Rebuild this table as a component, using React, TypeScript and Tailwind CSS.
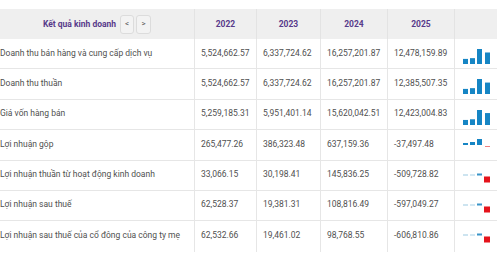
type Row = {
  label: string
  values: string[]
  nums: number[]
}

const rows: Row[] = [
  {
    label: 'Doanh thu bán hàng và cung cấp dịch vụ',
    values: ['5,524,662.57', '6,337,724.62', '16,257,201.87', '12,478,159.89'],
    nums: [5524662.57, 6337724.62, 16257201.87, 12478159.89],
  },
  {
    label: 'Doanh thu thuần',
    values: ['5,524,662.57', '6,337,724.62', '16,257,201.87', '12,385,507.35'],
    nums: [5524662.57, 6337724.62, 16257201.87, 12385507.35],
  },
  {
    label: 'Giá vốn hàng bán',
    values: ['5,259,185.31', '5,951,401.14', '15,620,042.51', '12,423,004.83'],
    nums: [5259185.31, 5951401.14, 15620042.51, 12423004.83],
  },
  {
    label: 'Lợi nhuận gộp',
    values: ['265,477.26', '386,323.48', '637,159.36', '-37,497.48'],
    nums: [265477.26, 386323.48, 637159.36, -37497.48],
  },
  {
    label: 'Lợi nhuận thuần từ hoạt động kinh doanh',
    values: ['33,066.15', '30,198.41', '145,836.25', '-509,728.82'],
    nums: [33066.15, 30198.41, 145836.25, -509728.82],
  },
  {
    label: 'Lợi nhuận sau thuế',
    values: ['62,528.37', '19,381.31', '108,816.49', '-597,049.27'],
    nums: [62528.37, 19381.31, 108816.49, -597049.27],
  },
  {
    label: 'Lợi nhuận sau thuế của cổ đông của công ty mẹ',
    values: ['62,532.66', '19,461.02', '98,768.55', '-606,810.86'],
    nums: [62532.66, 19461.02, 98768.55, -606810.86],
  },
]

const years = ['2022', '2023', '2024', '2025']
const grid = 'grid grid-cols-[195px_62px_64px_67px_67px_42px]'

// mini bar chart in the last column
function Spark({ nums, index }: { nums: number[]; index: number }) {
  const xs = [8, 15, 22, 30]
  const hasNeg = nums.some((n) => n < 0)

  if (!hasNeg) {
    const max = Math.max(...nums)
    const base = 25
    return (
      <svg width="42" height="30" viewBox="0 0 42 30">
        {nums.map((n, i) => {
          const h = Math.max(1, (n / max) * 15)
          return <rect key={i} x={xs[i]} y={base - h} width={5} height={h} fill="#1685c4" />
        })}
      </svg>
    )
  }

  if (index === 3) {
    const base = 15
    const hs = [2, 3, 6]
    return (
      <svg width="42" height="30" viewBox="0 0 42 30">
        {hs.map((h, i) => (
          <rect key={i} x={xs[i]} y={base - h} width={5} height={h} fill="#1685c4" />
        ))}
        <rect x={30} y={base + 1} width={5} height={1} fill="#f08080" />
      </svg>
    )
  }

  const base = 14.5
  return (
    <svg width="42" height="30" viewBox="0 0 42 30">
      <rect x={xs[0]} y={base - 1} width={5} height={1} fill="#9cc9e2" />
      <rect x={xs[1]} y={base - 1} width={5} height={1} fill="#a9d1e7" />
      <rect x={xs[2]} y={base - 2} width={5} height={2} fill="#3b95c8" />
      <rect x={29} y={base + 1} width={6} height={6} fill="#e5131b" />
    </svg>
  )
}

export default function App() {
  return (
    <div
      className="w-[497px] h-[261px] bg-white pt-[9px] overflow-hidden"
      style={{ fontFamily: 'Roboto, "Noto Sans", sans-serif' }}
    >
      {/* header */}
      <div className={`${grid} h-[30px] bg-[#efefef] text-[8.5px] font-bold text-[#573a8a]`}>
        <div className="flex items-center justify-center gap-1 border-r border-[#e3e3e3]">
          <span>Kết quả kinh doanh</span>
          <div className="flex gap-[2px]">
            <button className="w-[14px] h-[19px] flex items-center justify-center rounded-[3px] border border-[#dcdcdc] bg-[#f3f3f3] text-[8px] font-normal text-[#555]">
              &lt;
            </button>
            <button className="w-[15px] h-[19px] flex items-center justify-center rounded-[3px] border border-[#dcdcdc] bg-[#f3f3f3] text-[8px] font-normal text-[#555]">
              &gt;
            </button>
          </div>
        </div>
        {years.map((y) => (
          <div key={y} className="flex items-center justify-center border-r border-[#e3e3e3]">
            {y}
          </div>
        ))}
        <div />
      </div>

      {/* body */}
      {rows.map((r, i) => (
        <div
          key={r.label}
          className={`${grid} h-[30.4px] text-[8.5px] text-[#505050] ${i < rows.length - 1 ? 'border-b border-[#e6e6e6]' : ''}`}
        >
          <div className="pt-[7.5px] border-r border-[#e6e6e6] whitespace-nowrap">{r.label}</div>
          {r.values.map((v, j) => (
            <div key={j} className="pt-[7.5px] pl-[6px] border-r border-[#e6e6e6] whitespace-nowrap">
              {v}
            </div>
          ))}
          <div>
            <Spark nums={r.nums} index={i} />
          </div>
        </div>
      ))}
    </div>
  )
}
